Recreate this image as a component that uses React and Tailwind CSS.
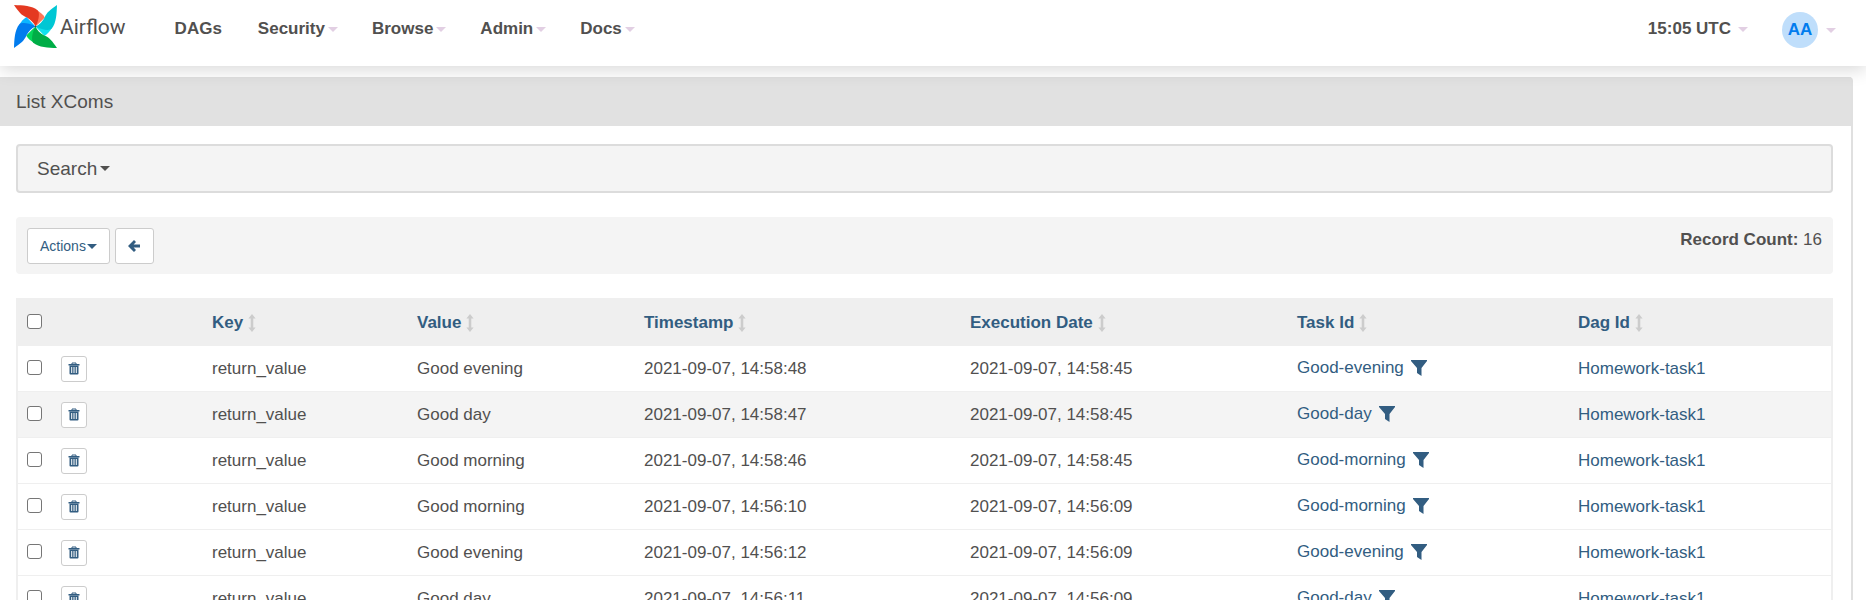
import React from "react";

const rows = [
  ["Good evening", "2021-09-07, 14:58:48", "2021-09-07, 14:58:45", "Good-evening"],
  ["Good day", "2021-09-07, 14:58:47", "2021-09-07, 14:58:45", "Good-day"],
  ["Good morning", "2021-09-07, 14:58:46", "2021-09-07, 14:58:45", "Good-morning"],
  ["Good morning", "2021-09-07, 14:56:10", "2021-09-07, 14:56:09", "Good-morning"],
  ["Good evening", "2021-09-07, 14:56:12", "2021-09-07, 14:56:09", "Good-evening"],
  ["Good day", "2021-09-07, 14:56:11", "2021-09-07, 14:56:09", "Good-day"],
];

const columns = ["Key", "Value", "Timestamp", "Execution Date", "Task Id", "Dag Id"];

const blades = [
  { angle: 0, dark: "#e43921", light: "#ff7557" },
  { angle: 90, dark: "#00c7d4", light: "#11e1ee" },
  { angle: 180, dark: "#00ad46", light: "#04d659" },
  { angle: 270, dark: "#017cee", light: "#0cb6ff" },
];

function Pinwheel() {
  return (
    <svg viewBox="-64 -64 128 128" className="size-[43px]" aria-hidden="true">
      {blades.map((b) => (
        <g key={b.angle} transform={`rotate(${b.angle})`}>
          <path fill={b.light} d="M4 -48C14 -44 22 -36 28 -27L0 0Z" />
          <path
            fill={b.dark}
            d="M-64 -64C-38 -63 -10 -62 7 -48C12 -42 12 -22 0 0C-5 -12 -14 -20 -26 -27C-42 -33 -50 -44 -64 -64Z"
          />
        </g>
      ))}
      <circle r="2.5" fill="#4a4848" />
    </svg>
  );
}

function Caret({ className = "" }) {
  return (
    <svg viewBox="0 0 10 5" className={`h-[5px] w-[10px] shrink-0 ${className}`} fill="currentColor" aria-hidden="true">
      <path d="M0 0H10L5 5Z" />
    </svg>
  );
}

function SortIcon() {
  return (
    <svg viewBox="0 0 8 18" className="h-[18px] w-2 text-[#cccccc]" fill="currentColor" aria-hidden="true">
      <path d="M4 0L7.6 4.6H5.3V13.4H7.6L4 18L0.4 13.4H2.7V4.6H0.4Z" />
    </svg>
  );
}

function FilterIcon() {
  return (
    <svg viewBox="0 0 16 16" className="size-4" fill="currentColor" aria-hidden="true">
      <path d="M0 0H16V1L10.5 8V16L6 13V8L0 1Z" />
    </svg>
  );
}

function TrashIcon() {
  return (
    <svg viewBox="0 0 12 13" className="h-[13px] w-3" aria-hidden="true">
      <path d="M4 2V1H8V2" fill="none" stroke="currentColor" />
      <path d="M0.5 2H11.5V3.5H0.5Z" fill="currentColor" />
      <path
        d="M1.5 3.5H10.5V11.5Q10.5 12.5 9.5 12.5H2.5Q1.5 12.5 1.5 11.5ZM3.2 5V11H4.2V5ZM5.5 5V11H6.5V5ZM7.8 5V11H8.8V5Z"
        fill="currentColor"
        fillRule="evenodd"
      />
    </svg>
  );
}

function ArrowLeft() {
  return (
    <svg viewBox="0 0 12 12" className="size-3" aria-hidden="true">
      <path d="M0 6L6 0L8 2L5.6 4.6H12V7.4H5.6L8 10L6 12Z" fill="currentColor" />
    </svg>
  );
}

const box =
  "block size-[15px] appearance-none rounded-[3px] border border-[#767676] bg-white checked:bg-[#017cee]";

export default function App() {
  return (
    <div className="h-screen overflow-hidden bg-white font-['Liberation_Sans',Arial,sans-serif] text-[17px] leading-6 text-[#51504f]">
      <header className="relative z-10 flex h-[66px] items-start justify-between bg-white pr-[30px] pl-[14px] shadow-[0_4px_16px_rgba(0,0,0,0.15)]">
        <div className="flex items-start">
          <a href="#home" className="flex items-start gap-[3px] pt-[5px] font-['Roboto',sans-serif] text-[21px]">
            <Pinwheel />
            <span className="pt-[10px]">Airflow</span>
          </a>
          <nav className="flex gap-[34px] pt-[17px] pl-[49px] font-bold">
            <a href="#dags" className="pr-0.5">DAGs</a>
            {["Security", "Browse", "Admin", "Docs"].map((n) => (
              <button key={n} type="button" className="flex items-center gap-[3px]">
                {n}
                <Caret className="text-[#e2cfe3]" />
              </button>
            ))}
          </nav>
        </div>
        <div className="flex items-start gap-[34px] pt-3 font-bold">
          <button type="button" className="flex items-center gap-[7px] pt-[5px]">
            15:05 UTC
            <Caret className="text-[#e2cfe3]" />
          </button>
          <button type="button" className="flex items-center gap-2">
            <span className="flex size-9 items-center justify-center rounded-full bg-[#bfdefb] text-[#017cee]">AA</span>
            <Caret className="text-[#e2cfe3]" />
          </button>
        </div>
      </header>

      <main className="mt-[11px] mr-[13px] rounded-tr border-r-2 border-[#e0e0e0]">
        <h1 className="bg-[#e1e1e1] py-3 pl-4 text-[19px] leading-[25px]">List XComs</h1>
        <div className="pt-[18px] pr-[18px] pl-4">
          <button
            type="button"
            className="flex h-[49px] w-full items-center gap-[3px] rounded border-2 border-[#dcdcdc] bg-[#f4f4f4] pl-[19px] text-[19px]"
          >
            Search
            <Caret />
          </button>

          <div className="mt-6 flex h-[57px] items-start justify-between rounded bg-[#f4f4f4] px-[11px] pt-[11px]">
            <div className="flex gap-[5px] text-sm text-[#325d81]">
              <button type="button" className="flex h-9 items-center gap-px rounded-[3px] border border-[#cccccc] bg-white px-3">
                Actions
                <Caret />
              </button>
              <button
                type="button"
                aria-label="Back"
                className="flex h-9 w-[39px] items-center justify-center rounded-[3px] border border-[#cccccc] bg-white"
              >
                <ArrowLeft />
              </button>
            </div>
            <p>
              <strong>Record Count:</strong> 16
            </p>
          </div>

          <div className="mt-6 border-x-2 border-[#efefef]">
            <table className="w-full table-fixed border-separate border-spacing-0 text-left">
              <colgroup>
                <col className="w-[34px]" />
                <col className="w-[150px]" />
                <col className="w-[205px]" />
                <col className="w-[227px]" />
                <col className="w-[326px]" />
                <col className="w-[327px]" />
                <col className="w-[281px]" />
                <col className="w-[263px]" />
              </colgroup>
              <thead>
                <tr className="h-12 bg-[#efefef] text-[#325d81]">
                  <th className="pb-0.5 pl-[9px]">
                    <input type="checkbox" aria-label="Select all" className={box} />
                  </th>
                  <th />
                  {columns.map((c) => (
                    <th key={c} className="pt-0.5 pl-[10px]">
                      <a href="#sort" className="flex items-center gap-[5px]">
                        {c}
                        <SortIcon />
                      </a>
                    </th>
                  ))}
                </tr>
              </thead>
              <tbody className="[&_td]:h-[46px] [&_td]:border-b [&_td]:border-[#efefef]">
                {rows.map(([value, ts, exec, task], i) => (
                  <tr key={i} className={i === 1 ? "bg-[#f4f4f4]" : "bg-white"}>
                    <td className="pb-0.5 pl-[9px]">
                      <input type="checkbox" aria-label={`Select row ${i + 1}`} className={box} />
                    </td>
                    <td className="pl-[9px]">
                      <button
                        type="button"
                        aria-label="Delete record"
                        className="flex size-[26px] items-center justify-center rounded-[3px] border border-[#cccccc] bg-white text-[#325d81]"
                      >
                        <TrashIcon />
                      </button>
                    </td>
                    <td className="pl-[10px]">return_value</td>
                    <td className="pl-[10px]">{value}</td>
                    <td className="pl-[10px]">{ts}</td>
                    <td className="pl-[10px]">{exec}</td>
                    <td className="pl-[10px] text-[#325d81]">
                      <div className="flex items-center gap-[7px] pb-[2px]">
                        <a href="#task">{task}</a>
                        <a href="#filter" aria-label={`Filter by ${task}`}>
                          <FilterIcon />
                        </a>
                      </div>
                    </td>
                    <td className="pl-[10px] text-[#325d81]">
                      <a href="#dag">Homework-task1</a>
                    </td>
                  </tr>
                ))}
              </tbody>
            </table>
          </div>
        </div>
      </main>
    </div>
  );
}
